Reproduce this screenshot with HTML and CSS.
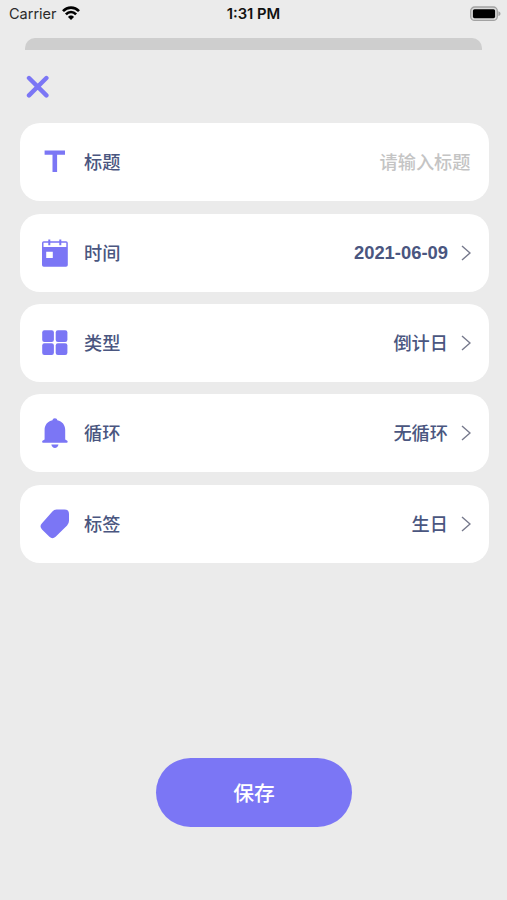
FILE: index.html
```html
<!DOCTYPE html>
<html lang="zh-CN">
<head>
    <meta charset="UTF-8">
    <title>倒计日</title>
    <link rel="stylesheet" href="styles.css">
</head>
<body>
<div class="screen">
    <header class="status-bar">
        <div class="status-left">
            <span class="carrier">Carrier</span>
            <svg class="wifi" width="18" height="14" viewBox="0 0 18 14" fill="none" stroke="#000" stroke-width="2.6">
                <path d="M1 5.2C5.5 0.4 12.5 0.4 17 5.2"/>
                <path d="M3.9 8.3C6.8 5.2 11.2 5.2 14.1 8.3"/>
                <path d="M6 10.9C7.7 9 10.3 9 12 10.9L9 14Z" fill="#000" stroke="none"/>
            </svg>
        </div>
        <span class="clock">1:31 PM</span>
        <div class="status-right">
            <svg class="battery" width="31" height="16" viewBox="0 0 31 16">
                <rect x="0.7" y="1" width="26.6" height="13.4" rx="4" fill="#dadada" stroke="#a2a2a2" stroke-width="1.3"/>
                <rect x="2.9" y="3.2" width="22.2" height="9" rx="1.6" fill="#000"/>
                <path d="M28.4 5.3C31.2 6.4 31.2 9 28.4 10.1Z" fill="#a2a2a2"/>
            </svg>
        </div>
    </header>

    <div class="sheet-behind"></div>

    <main class="sheet">
        <button class="close-btn" type="button" aria-label="关闭">
            <svg width="24" height="24" viewBox="0 0 24 24" stroke="#7b76f5" stroke-width="4.4" stroke-linecap="round">
                <path d="M3 3L20.4 20.4M20.4 3L3 20.4"/>
            </svg>
        </button>

        <div class="form-list">
            <label class="form-row">
                <svg class="row-icon" viewBox="0 0 32 32">
                    <path d="M5.6 4.4H26V8.8H18.1V26H13.5V8.8H5.6Z"/>
                </svg>
                <span class="row-label">标题</span>
                <input class="title-input" type="text" placeholder="请输入标题">
            </label>
            <div class="form-row">
                <svg class="row-icon" viewBox="0 0 32 32">
                    <path fill-rule="evenodd" d="M4.8 4.3H27A1.8 1.8 0 0 1 28.8 6.1V28A1.8 1.8 0 0 1 27 29.8H4.8A1.8 1.8 0 0 1 3 28V6.1A1.8 1.8 0 0 1 4.8 4.3ZM4.5 5.8V10H27.3V5.8ZM7.2 14.8V21H13.8V14.8Z"/>
                    <path d="M9.3 2.4H11.3V8.3H9.3ZM20.3 2.4H22.3V8.3H20.3Z"/>
                </svg>
                <span class="row-label">时间</span>
                <span class="row-value date">2021-06-09</span>
                <svg class="arrow" viewBox="0 0 10 16"><path d="M1 1L9 8L1 15"/></svg>
            </div>
            <div class="form-row">
                <svg class="row-icon" viewBox="0 0 32 32">
                    <rect x="3.2" y="3.2" width="11.7" height="11.7" rx="2.2"/>
                    <rect x="16.7" y="3.2" width="11.7" height="11.7" rx="2.2"/>
                    <rect x="3.2" y="16.3" width="11.7" height="11.7" rx="2.2"/>
                    <rect x="16.7" y="16.3" width="11.7" height="11.7" rx="2.2"/>
                </svg>
                <span class="row-label">类型</span>
                <span class="row-value">倒计日</span>
                <svg class="arrow" viewBox="0 0 10 16"><path d="M1 1L9 8L1 15"/></svg>
            </div>
            <div class="form-row">
                <svg class="row-icon" viewBox="0 0 32 32">
                    <path d="M15.9 1.2C17.3 1.2 18.2 2 18.3 3.3C23.2 4.3 26.2 8 26.2 12.8V22.4L28.3 23.8C29 24.6 28.8 25.8 27.8 25.8H4C3 25.8 2.8 24.6 3.5 23.8L5.6 22.4V12.8C5.6 8 8.6 4.3 13.5 3.3C13.6 2 14.5 1.2 15.9 1.2Z"/>
                    <path d="M12.3 27.5H19.5C19 29.7 17.7 30.9 15.9 30.9C14.1 30.9 12.8 29.7 12.3 27.5Z"/>
                </svg>
                <span class="row-label">循环</span>
                <span class="row-value">无循环</span>
                <svg class="arrow" viewBox="0 0 10 16"><path d="M1 1L9 8L1 15"/></svg>
            </div>
            <div class="form-row">
                <svg class="row-icon" viewBox="0 0 32 32">
                    <path d="M17.5 1.6H25.5Q30 1.6 30 6V12.8Q30 15.6 28.1 17.4L16.6 28.8Q13.4 31.6 10.4 28.8L3 21.4Q0 18.2 3 15.2L13.4 3.4Q15 1.6 17.5 1.6Z"/>
                </svg>
                <span class="row-label">标签</span>
                <span class="row-value">生日</span>
                <svg class="arrow" viewBox="0 0 10 16"><path d="M1 1L9 8L1 15"/></svg>
            </div>
        </div>

        <button class="save-btn" type="button">保存</button>
    </main>
</div>
</body>
</html>
```
FILE: styles.css
```css
* {
    box-sizing: border-box;
}
body {
    margin: 0;
    background-color: #ebebeb;
    font-family: "Liberation Sans", "Noto Sans CJK SC", sans-serif;
    color: #4a5680;
}
button {
    border: 0;
    padding: 0;
    background: none;
}
.screen {
    display: flex;
    flex-direction: column;
    height: 900px;
    overflow: hidden;
}
.status-bar {
    display: grid;
    grid-template-columns: 1fr auto 1fr;
    align-items: center;
    height: 28px;
    padding: 0 6px 0 9px;
    font-family: Inter, sans-serif;
    color: #111;
}
.status-left {
    display: flex;
    align-items: center;
    gap: 5px;
}
.carrier {
    margin-top: -2px;
    font-size: 14.5px;
    color: #2a2a2a;
}
.wifi {
    margin-top: -2px;
}
.clock {
    margin-right: 3px;
    font-size: 14.8px;
    font-weight: 600;
}
.status-right {
    display: flex;
    justify-content: flex-end;
}
.battery {
    margin-top: -1px;
}
.sheet-behind {
    height: 12px;
    margin: 10px 25px 0;
    border-radius: 10px 10px 0 0;
    background-color: #cecece;
}
.sheet {
    flex: 1;
    display: flex;
    flex-direction: column;
    padding: 25px 18.5px 73.5px 19.5px;
}
.close-btn {
    width: 24px;
    height: 24px;
    margin-left: 6px;
}
.close-btn svg {
    display: block;
}
.form-list {
    display: flex;
    flex-direction: column;
    gap: 12.4px;
    margin-top: 24.2px;
}
.form-row {
    display: flex;
    align-items: center;
    height: 78px;
    padding: 0 18px 0 19.5px;
    border-radius: 20px;
    background-color: #fff;
    font-size: 18.2px;
    font-weight: 500;
}
.row-icon {
    width: 32px;
    height: 32px;
    margin-right: 13px;
    fill: #7b76f5;
}
.row-label {
    flex: 1;
}
.row-label, .row-value {
    padding-bottom: 2px;
}
.title-input {
    width: 160px;
    padding: 3px 0 0;
    border: 0;
    outline: 0;
    font: inherit;
    text-align: right;
}
.title-input::placeholder {
    color: #c4c4c4;
}
.row-value.date {
    padding-bottom: 0;
    padding-top: 1px;
    font-size: 18.4px;
    font-weight: 700;
}
.arrow {
    width: 10px;
    height: 16px;
    margin-left: 12.5px;
    fill: none;
    stroke: #76798c;
    stroke-width: 1.4;
}
.save-btn {
    align-self: center;
    width: 196px;
    height: 68.5px;
    margin-top: auto;
    border-radius: 35px;
    background-color: #7b76f5;
    color: #fff;
    font-family: inherit;
    font-size: 20.8px;
    font-weight: 500;
}
```
